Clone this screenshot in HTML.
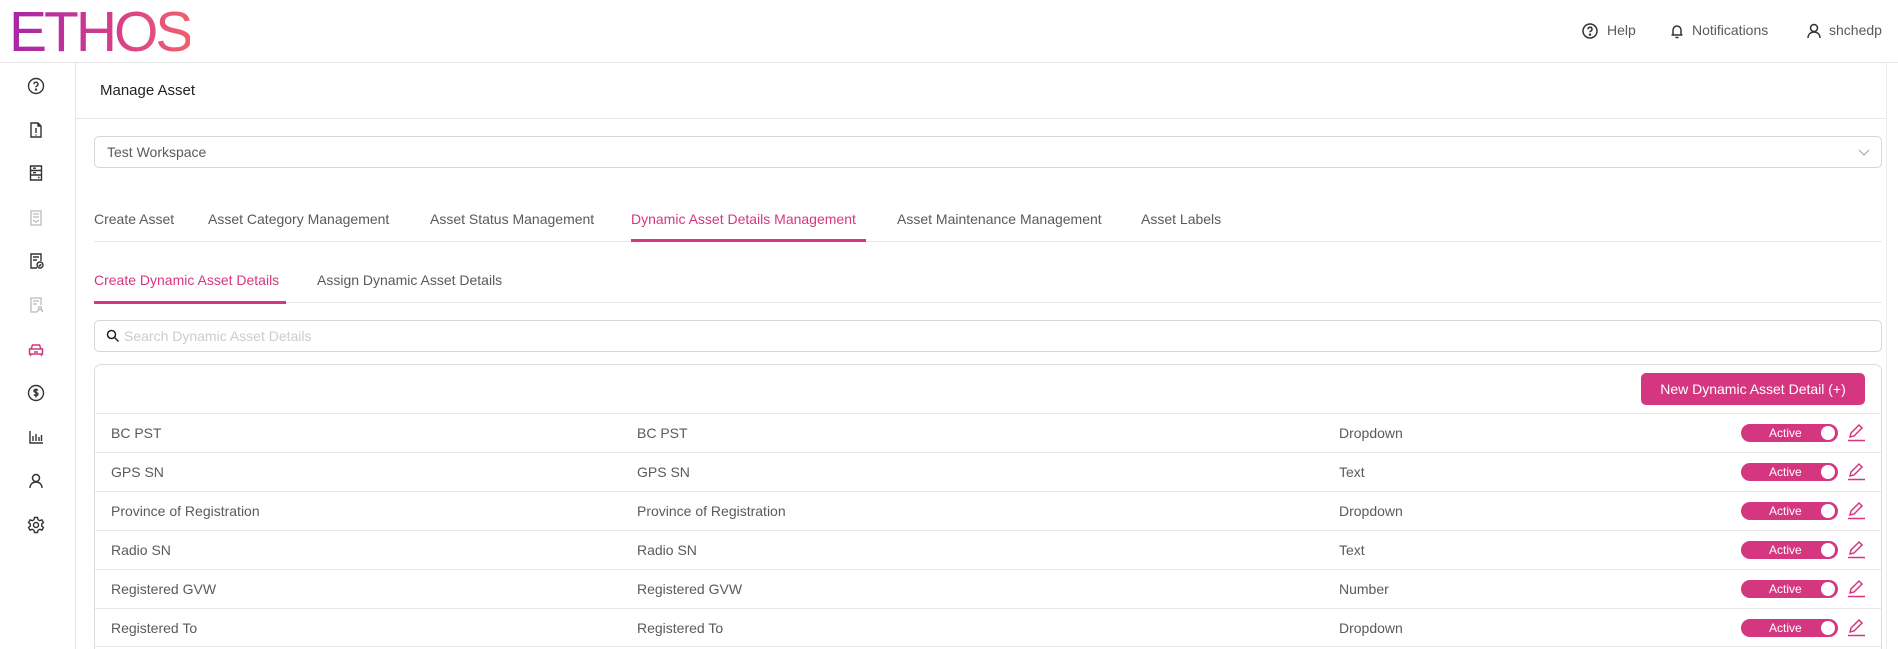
<!DOCTYPE html>
<html><head><meta charset="utf-8"><style>
*{box-sizing:border-box;margin:0;padding:0}
html,body{width:1898px;height:649px;overflow:hidden}
body{background:#fff;font-family:"Liberation Sans",sans-serif;color:#5a5a5a;position:relative;font-size:14px}
.a{position:absolute;white-space:nowrap}
.pink{color:#d4377f}
.hl{position:absolute;height:1px;background:#e6e6e6}
.ico{position:absolute;width:18px;height:18px}
.row{position:absolute;left:95px;width:1786px;height:39px;border-top:1px solid #e8e8e8}
.row span{position:absolute;top:11px;font-size:14px;color:#5a5a5a}
.tog{position:absolute;left:1646px;top:10px;width:97px;height:18px;background:#d4377f;border-radius:9px;color:#fff;font-size:12px;padding-left:28px;line-height:18px}
.tog:after{content:"";position:absolute;right:3px;top:2px;width:14px;height:14px;border-radius:50%;background:#fff}
.pen{position:absolute;left:1751px;top:8px}
</style></head><body>
<div class="a" style="left:9px;top:3px;font-size:57px;font-weight:normal;letter-spacing:-3px;background:linear-gradient(90deg,#a625a8,#d43c8c 55%,#f0606e);-webkit-background-clip:text;color:transparent;line-height:58px">ETHOS</div>

<!-- header right -->
<svg class="ico" style="left:1581px;top:22px" viewBox="0 0 18 18" fill="none" stroke="#333" stroke-width="1.5"><circle cx="9" cy="9" r="7"/><path d="M7 7.2a2 2 0 1 1 2.6 1.9c-.5.2-.6.6-.6 1.2"/><circle cx="9" cy="12.6" r=".5" fill="#333"/></svg>
<div class="a" style="left:1607px;top:22px;font-size:14px">Help</div>
<svg class="ico" style="left:1668px;top:22px" viewBox="0 0 18 18" fill="none" stroke="#333" stroke-width="1.5"><path d="M5 13V8a4 4 0 0 1 8 0v5M3.5 13h11M7.5 15.5h3"/></svg>
<div class="a" style="left:1692px;top:22px;font-size:14px">Notifications</div>
<svg class="ico" style="left:1805px;top:22px" viewBox="0 0 18 18" fill="none" stroke="#333" stroke-width="1.5"><circle cx="9" cy="6" r="3.5"/><path d="M3 16c0-4 3-6 6-6s6 2 6 6"/></svg>
<div class="a" style="left:1829px;top:22px;font-size:14px">shchedp</div>

<div class="hl" style="left:0;top:62px;width:1898px"></div>
<div style="position:absolute;left:75px;top:62px;width:1px;height:587px;background:#e6e6e6"></div>
<div style="position:absolute;left:1886px;top:62px;width:1px;height:587px;background:#eee"></div>

<!-- sidebar icons -->
<svg class="ico" style="left:27px;top:77px" viewBox="0 0 18 18" fill="none" stroke="#333" stroke-width="1.4"><circle cx="9" cy="9" r="7.5"/><path d="M7 7.2a2 2 0 1 1 2.6 1.9c-.5.2-.6.6-.6 1.2"/><circle cx="9" cy="12.6" r=".5" fill="#333"/></svg>
<svg class="ico" style="left:27px;top:121px" viewBox="0 0 18 18" fill="none" stroke="#333" stroke-width="1.4"><path d="M4 2h7l3 3v11H4zM11 2v3h3M9 7v5M9 13.5v1"/></svg>
<svg class="ico" style="left:27px;top:164px" viewBox="0 0 18 18" fill="none" stroke="#333" stroke-width="1.4"><path d="M3.5 2h11v14h-11zM3.5 6.5h11M3.5 11h11M6 4.2h3M6 8.7h3M11 13.5h1.5"/></svg>
<svg class="ico" style="left:27px;top:209px" viewBox="0 0 18 18" fill="none" stroke="#bbb" stroke-width="1.3"><path d="M4 2h10v14H4zM6 5h6M6 8h6M6 11l3 2 3-2"/></svg>
<svg class="ico" style="left:27px;top:252px" viewBox="0 0 18 18" fill="none" stroke="#333" stroke-width="1.4"><path d="M10 16H4V2h10v7M6 5h6M6 8h4"/><circle cx="13" cy="13" r="3"/><path d="M11.8 13l.9.9 1.6-1.6"/></svg>
<svg class="ico" style="left:27px;top:296px" viewBox="0 0 18 18" fill="none" stroke="#bbb" stroke-width="1.3"><path d="M10 16H4V2h10v7M6 5h6M6 8h4"/><circle cx="13" cy="12" r="1.5"/><path d="M10.5 16c0-2 1.2-2.5 2.5-2.5s2.5.5 2.5 2.5"/></svg>
<svg class="ico" style="left:27px;top:341px" viewBox="0 0 18 18" fill="none" stroke="#d4377f" stroke-width="1.5"><path d="M4 8l1.5-4h7L14 8M2.5 8h13v5h-13zM3.5 13v2M14.5 13v2M7 11h4"/></svg>
<svg class="ico" style="left:27px;top:384px" viewBox="0 0 18 18" fill="none" stroke="#333" stroke-width="1.4"><circle cx="9" cy="9" r="7.5"/><path d="M11 6.5c-.5-.7-1.2-1-2-1-1.2 0-2 .6-2 1.5 0 2 4 1 4 3 0 .9-.8 1.5-2 1.5-.9 0-1.6-.3-2-1M9 4.5v9"/></svg>
<svg class="ico" style="left:27px;top:428px" viewBox="0 0 18 18" fill="none" stroke="#333" stroke-width="1.4"><path d="M3 3v12h13M6 13V8M9 13V6M12 13V9M14.5 13V7"/></svg>
<svg class="ico" style="left:27px;top:472px" viewBox="0 0 18 18" fill="none" stroke="#333" stroke-width="1.5"><circle cx="9" cy="6" r="3.5"/><path d="M3 16c0-4 3-6 6-6s6 2 6 6"/></svg>
<svg class="ico" style="left:27px;top:516px" viewBox="0 0 18 18" fill="none" stroke="#333" stroke-width="1.4"><circle cx="9" cy="9" r="2.5"/><path d="M7.5 1.5h3l.5 2.2 1.8 1 2.1-.8 1.5 2.6-1.7 1.5v2l1.7 1.5-1.5 2.6-2.1-.8-1.8 1-.5 2.2h-3l-.5-2.2-1.8-1-2.1.8-1.5-2.6 1.7-1.5v-2L1.6 6.5l1.5-2.6 2.1.8 1.8-1z"/></svg>

<div class="a" style="left:100px;top:82px;font-size:15px;color:#222">Manage Asset</div>
<div class="hl" style="left:76px;top:118px;width:1810px"></div>

<div style="position:absolute;left:94px;top:136px;width:1788px;height:32px;border:1px solid #d8d8d8;border-radius:5px"></div>
<div class="a" style="left:107px;top:144px;font-size:14px">Test Workspace</div>
<svg style="position:absolute;left:1858px;top:147px" width="12" height="10" viewBox="0 0 12 10" fill="none" stroke="#aaa" stroke-width="1.2"><path d="M1 3l5 5 5-5"/></svg>

<div class="a" style="left:94px;top:211px">Create Asset</div>
<div class="a" style="left:208px;top:211px">Asset Category Management</div>
<div class="a" style="left:430px;top:211px">Asset Status Management</div>
<div class="a pink" style="left:631px;top:211px">Dynamic Asset Details Management</div>
<div class="a" style="left:897px;top:211px">Asset Maintenance Management</div>
<div class="a" style="left:1141px;top:211px">Asset Labels</div>
<div class="hl" style="left:94px;top:241px;width:1788px"></div>
<div style="position:absolute;left:631px;top:239px;width:235px;height:3px;background:#d4377f"></div>

<div class="a pink" style="left:94px;top:272px">Create Dynamic Asset Details</div>
<div class="a" style="left:317px;top:272px">Assign Dynamic Asset Details</div>
<div class="hl" style="left:94px;top:302px;width:1788px"></div>
<div style="position:absolute;left:94px;top:301px;width:192px;height:3px;background:#d4377f"></div>

<div style="position:absolute;left:94px;top:320px;width:1788px;height:32px;border:1px solid #d8d8d8;border-radius:5px"></div>
<svg style="position:absolute;left:106px;top:329px" width="14" height="14" viewBox="0 0 14 14" fill="none" stroke="#222" stroke-width="1.5"><circle cx="5.5" cy="5.5" r="4"/><path d="M8.5 8.5l4 4"/></svg>
<div class="a" style="left:124px;top:328px;color:#ccc">Search Dynamic Asset Details</div>

<div style="position:absolute;left:94px;top:364px;width:1788px;height:300px;border:1px solid #ddd;border-radius:7px"></div>
<div class="a" style="left:1641px;top:373px;width:224px;height:32px;background:#d4377f;border-radius:5px;color:#fff;font-size:14px;text-align:center;line-height:32px">New Dynamic Asset Detail (+)</div>

<div class="row" style="top:413px"><span style="left:16px">BC PST</span><span style="left:542px">BC PST</span><span style="left:1244px">Dropdown</span><div class="tog">Active</div><svg class="pen" width="20" height="20" viewBox="0 0 20 20" fill="none" stroke="#d4377f" stroke-width="1.5"><path d="M4 15l1-4 8-8 3 3-8 8zM2 18.5h17"/></svg></div>
<div class="row" style="top:452px"><span style="left:16px">GPS SN</span><span style="left:542px">GPS SN</span><span style="left:1244px">Text</span><div class="tog">Active</div><svg class="pen" width="20" height="20" viewBox="0 0 20 20" fill="none" stroke="#d4377f" stroke-width="1.5"><path d="M4 15l1-4 8-8 3 3-8 8zM2 18.5h17"/></svg></div>
<div class="row" style="top:491px"><span style="left:16px">Province of Registration</span><span style="left:542px">Province of Registration</span><span style="left:1244px">Dropdown</span><div class="tog">Active</div><svg class="pen" width="20" height="20" viewBox="0 0 20 20" fill="none" stroke="#d4377f" stroke-width="1.5"><path d="M4 15l1-4 8-8 3 3-8 8zM2 18.5h17"/></svg></div>
<div class="row" style="top:530px"><span style="left:16px">Radio SN</span><span style="left:542px">Radio SN</span><span style="left:1244px">Text</span><div class="tog">Active</div><svg class="pen" width="20" height="20" viewBox="0 0 20 20" fill="none" stroke="#d4377f" stroke-width="1.5"><path d="M4 15l1-4 8-8 3 3-8 8zM2 18.5h17"/></svg></div>
<div class="row" style="top:569px"><span style="left:16px">Registered GVW</span><span style="left:542px">Registered GVW</span><span style="left:1244px">Number</span><div class="tog">Active</div><svg class="pen" width="20" height="20" viewBox="0 0 20 20" fill="none" stroke="#d4377f" stroke-width="1.5"><path d="M4 15l1-4 8-8 3 3-8 8zM2 18.5h17"/></svg></div>
<div class="row" style="top:608px"><span style="left:16px">Registered To</span><span style="left:542px">Registered To</span><span style="left:1244px">Dropdown</span><div class="tog">Active</div><svg class="pen" width="20" height="20" viewBox="0 0 20 20" fill="none" stroke="#d4377f" stroke-width="1.5"><path d="M4 15l1-4 8-8 3 3-8 8zM2 18.5h17"/></svg></div>
<div class="hl" style="left:95px;top:646px;width:1786px"></div>
</body></html>
